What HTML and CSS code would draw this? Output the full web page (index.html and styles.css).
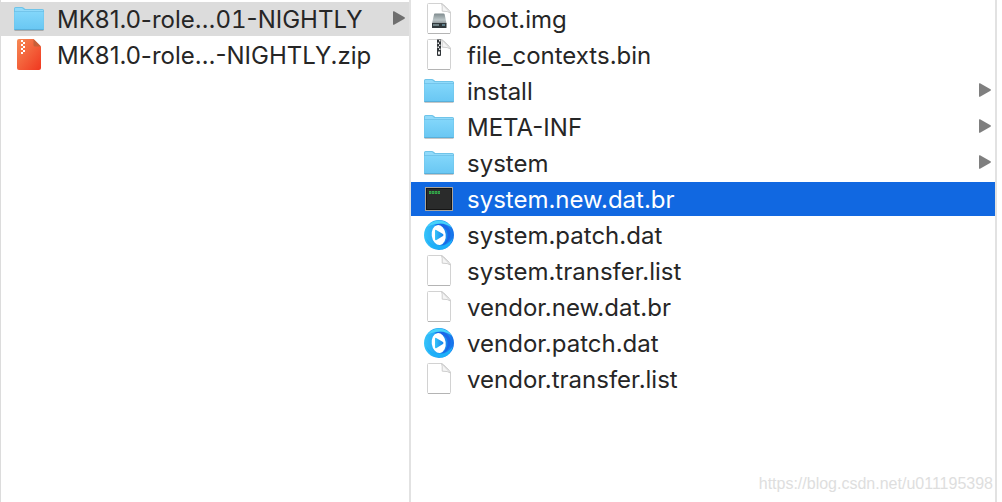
FILE: index.html
```html
<!DOCTYPE html>
<html lang="en">
<head>
<meta charset="utf-8">
<title>Files</title>
<link rel="stylesheet" href="styles.css">
</head>
<body>
<svg class="sprite" aria-hidden="true">
  <defs>
    <linearGradient id="gFolder" x1="0" y1="0" x2="0" y2="1"><stop offset="0" stop-color="#82d6fa"/><stop offset="1" stop-color="#69c7f3"/></linearGradient>
    <linearGradient id="gZip" x1="0" y1="0" x2="1" y2="1"><stop offset="0" stop-color="#f68a55"/><stop offset="1" stop-color="#f0371f"/></linearGradient>
    <linearGradient id="gDisk" x1="0" y1="0" x2="0" y2="1"><stop offset="0" stop-color="#7f8b8e"/><stop offset=".65" stop-color="#bcc6c8"/><stop offset="1" stop-color="#8d9496"/></linearGradient>
    <linearGradient id="gRing" x1="0" y1="0" x2="1" y2="0"><stop offset="0" stop-color="#35c4fa"/><stop offset=".5" stop-color="#21a0f4"/><stop offset="1" stop-color="#1570ea"/></linearGradient>
    <linearGradient id="gPlay" x1="0" y1="0" x2="1" y2="0"><stop offset="0" stop-color="#35c4f8"/><stop offset="1" stop-color="#1683ee"/></linearGradient>
  </defs>
  <symbol id="folder" viewBox="0 0 32 32">
    <path d="M1.500 28.500h29" stroke="#000" stroke-opacity=".22"/>
    <path d="M1 6.500Q1 5 2.500 5H9q1 0 1.700.8L12.300 7H29.500Q31 7 31 8.500V28H1z" fill="#6fc4e9"/>
    <path d="M2 6.500Q2 6 2.500 6H9l2.300 2H30V10H2z" fill="#91dafa"/>
    <path d="M1.500 10h29V26.500q0 1-1 1h-27q-1 0-1-1z" fill="url(#gFolder)"/>
    <path d="M1.500 9.500h29" stroke="#65bce4" stroke-width=".7"/>
    <path d="M1.500 27.500h29" stroke="#54aad3" stroke-width=".8"/>
  </symbol>
  <symbol id="zip" viewBox="0 0 32 32">
    <path d="M6 1H20.500L28 8.500V30q0 2-2 2H6q-2 0-2-2V3Q4 1 6 1z" fill="url(#gZip)"/>
    <path d="M20.500 1 28 8.500H22q-1.500 0-1.500-1.500z" fill="#c66039"/>
    <path d="M8 2h2v2H8zM10 4h2v2h-2zM8 6h2v2H8zM10 8h2v2h-2zM8 10h2v2H8zM10 12h2v2h-2zM8 14h2v2H8z" fill="#fff"/>
  </symbol>
  <symbol id="page" viewBox="0 0 32 32">
    <path d="M5.500 1.500H18Q19.500 1.500 20.500 2.500L26.500 8.500Q27.500 9.500 27.500 11V30.500Q27.500 31.500 26.500 31.500H5.500Q4.500 31.500 4.500 30.500V2.500Q4.500 1.500 5.500 1.500z" fill="#fff" stroke="#d2d2d2"/>
    <path d="M5 31.500h22" stroke="#b4b4b4"/>
    <path d="M18.500 1.500Q19.500 3 19.200 9.200 25 9 27.500 11z" fill="#f5f5f5" stroke="#c9c9c9" stroke-width=".9" stroke-linejoin="round"/>
  </symbol>
  <symbol id="disk" viewBox="0 0 32 32">
    <use href="#page"/>
    <path d="M11 12.500Q11 11.500 12 11.500H20.500Q21.500 11.500 21.700 12.500L23.500 21.500H9z" fill="url(#gDisk)"/>
    <path d="M9 21h14.500v4.500Q23.500 26 23 26H9.500Q9 26 9 25.500z" fill="#30383b"/>
    <path d="M10 22h6v2h-6z" fill="#6f8185"/>
    <path d="M19 23h3" stroke="#8fc4d8"/>
  </symbol>
  <symbol id="binary" viewBox="0 0 32 32">
    <use href="#page"/>
    <path d="M14 1.500h4V17q0 1-1 1h-2q-1 0-1-1z" fill="#303538"/>
    <path d="M16 2h1.500v1.500H16zM14.500 4.500H16V6h-1.500zM16 6.500h1.500V8H16zM14.500 8.500H16V10h-1.500zM16 10.500h1.500V12H16zM15 13.500h2v3h-2z" fill="#eee"/>
  </symbol>
  <symbol id="exec" viewBox="0 0 32 32">
    <path d="M2 5h28v24H2z" fill="#aaa49b"/>
    <path d="M3 6h26v22H3z" fill="#151515"/>
    <path d="M4 7h24v20H4z" fill="#2a2b2b"/>
    <path d="M6 10.500h11" stroke="#35a84b" stroke-width="3" stroke-dasharray="2.300 .6"/>
    <path d="M6 10.500h11" stroke="#267336" stroke-width=".6"/>
  </symbol>
  <symbol id="player" viewBox="0 0 32 32">
    <circle cx="16" cy="17" r="15" fill="url(#gRing)"/>
    <path d="M11 7Q20 3 25 9 30 15 26 22 23 27 18 27.500 27 22 24 13 20 7 11 7z" fill="#1b67e7"/>
    <path d="M4 9Q9 2 17 2.500 25 3 29 10 22 4 13 6 7 7 4 9z" fill="#46d3fa"/>
    <path d="M3 20Q8 28 18 28 25 27 30 20 28 29 20 31.500 7 32 3 20z" fill="#1db0f8"/>
    <ellipse cx="15.700" cy="17" rx="7" ry="10" fill="#fff" transform="rotate(-8 16 17)"/>
    <path d="M12 12.500Q12 11.300 13.200 12L20 16Q21 17 20 18L13.500 22Q12.200 22.600 12 21.300z" fill="url(#gPlay)"/>
  </symbol>
  <symbol id="arrow" viewBox="0 0 12 14"><path d="M0 .8Q0-.2 1 .3L11.500 6.300Q12.300 7 11.500 7.700L1 13.700Q0 14.200 0 13.200z" fill="currentColor"/></symbol>
</svg>

<main class="browser">
  <ul class="column column-parent">
    <li><button class="row row-open"><svg class="icon"><use href="#folder"/></svg><span class="name">MK81.0-role…<span class="digits">01</span>-NIGHTLY</span><svg class="arrow"><use href="#arrow"/></svg></button></li>
    <li><button class="row"><svg class="icon"><use href="#zip"/></svg><span class="name">MK81.0-role…-NIGHTLY.zip</span></button></li>
  </ul>
  <ul class="column column-files">
    <li><button class="row"><svg class="icon"><use href="#disk"/></svg><span class="name">boot.img</span></button></li>
    <li><button class="row"><svg class="icon"><use href="#binary"/></svg><span class="name">file_contexts.bin</span></button></li>
    <li><button class="row"><svg class="icon"><use href="#folder"/></svg><span class="name">install</span><svg class="arrow"><use href="#arrow"/></svg></button></li>
    <li><button class="row"><svg class="icon"><use href="#folder"/></svg><span class="name">META-INF</span><svg class="arrow"><use href="#arrow"/></svg></button></li>
    <li><button class="row"><svg class="icon"><use href="#folder"/></svg><span class="name">system</span><svg class="arrow"><use href="#arrow"/></svg></button></li>
    <li><button class="row row-selected"><svg class="icon"><use href="#exec"/></svg><span class="name">system.new.dat.br</span></button></li>
    <li><button class="row"><svg class="icon"><use href="#player"/></svg><span class="name">system.patch.dat</span></button></li>
    <li><button class="row"><svg class="icon"><use href="#page"/></svg><span class="name">system.transfer.list</span></button></li>
    <li><button class="row"><svg class="icon"><use href="#page"/></svg><span class="name">vendor.new.dat.br</span></button></li>
    <li><button class="row"><svg class="icon"><use href="#player"/></svg><span class="name">vendor.patch.dat</span></button></li>
    <li><button class="row"><svg class="icon"><use href="#page"/></svg><span class="name">vendor.transfer.list</span></button></li>
  </ul>
</main>
<div class="watermark">https://blog.csdn.net/u011195398</div>
</body>
</html>
```
FILE: styles.css
```css
* {
  box-sizing: border-box;
}

body {
  margin: 0;
  background: #fff;
  color: #262626;
  font-family: Inter, "Liberation Sans", sans-serif;
}

.sprite {
  position: absolute;
  width: 0;
  height: 0;
}

.browser {
  display: flex;
  min-height: 100vh;
  padding-right: 5px;
  border-left: 1px solid #dcdcdc;
}

.column {
  display: flex;
  flex-direction: column;
  gap: 2px;
  margin: 0;
  padding: 2px 0 0;
  list-style: none;
  border-right: 2px solid #e2e2e2;
}

.column-parent {
  flex: 0 0 410px;
}

.column-files {
  flex: 1;
  min-width: 0;
}

.row {
  display: flex;
  align-items: center;
  width: 100%;
  height: 34px;
  padding: 0 4px 2px 12px;
  border: 0;
  background: none;
  color: inherit;
  font: inherit;
  font-size: 24px;
  line-height: 28px;
  text-align: left;
}

.row-open {
  background: #dcdcdc;
}

.row-selected {
  background: #1168e1;
  color: #fff;
}

.icon {
  flex: none;
  width: 32px;
  height: 32px;
  margin-right: 12px;
}

.name {
  flex: 1;
  padding-top: 4px;
  white-space: nowrap;
}

.digits {
  font-variant-numeric: tabular-nums;
}

.arrow {
  flex: none;
  width: 12px;
  height: 14px;
  color: #7f7f7f;
}

.row-open .arrow {
  color: #6e6e6e;
}

.watermark {
  position: absolute;
  right: 9px;
  bottom: 8px;
  color: #dedede;
  font-family: "Liberation Sans", Arial, sans-serif;
  font-size: 16px;
  line-height: 20px;
}
```
